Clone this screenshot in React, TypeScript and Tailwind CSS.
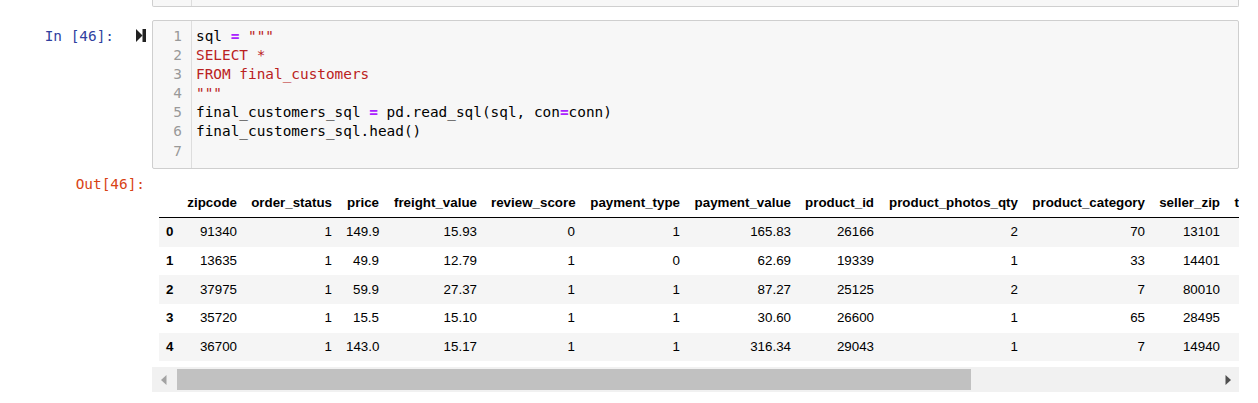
import React from "react";

const headers: { label: string; cls: string }[] = [
  { label: "zipcode", cls: "w-[64px]" },
  { label: "order_status", cls: "w-[95px]" },
  { label: "price", cls: "w-[47px]" },
  { label: "freight_value", cls: "w-[98px]" },
  { label: "review_score", cls: "w-[98px]" },
  { label: "payment_type", cls: "w-[105px]" },
  { label: "payment_value", cls: "w-[111px]" },
  { label: "product_id", cls: "w-[83px]" },
  { label: "product_photos_qty", cls: "w-[144px]" },
  { label: "product_category", cls: "w-[127px]" },
  { label: "seller_zip", cls: "w-[75px]" },
  { label: "total_items", cls: "w-[85px]" },
];

const rows = [
  ["0", "91340", "1", "149.9", "15.93", "0", "1", "165.83", "26166", "2", "70", "13101", "1"],
  ["1", "13635", "1", "49.9", "12.79", "1", "0", "62.69", "19339", "1", "33", "14401", "1"],
  ["2", "37975", "1", "59.9", "27.37", "1", "1", "87.27", "25125", "2", "7", "80010", "1"],
  ["3", "35720", "1", "15.5", "15.10", "1", "1", "30.60", "26600", "1", "65", "28495", "1"],
  ["4", "36700", "1", "143.0", "15.17", "1", "1", "316.34", "29043", "1", "7", "14940", "1"],
];

const mono = "font-['DejaVu_Sans_Mono','Liberation_Mono',monospace] text-[14.4px] leading-[19.17px]";

function Op() {
  return <span className="text-[#AA22FF] font-bold">=</span>;
}

function Str({ children }: { children: React.ReactNode }) {
  return <span className="text-[#BA2121]">{children}</span>;
}

export default function App() {
  return (
    <div className="w-[1258px] h-[403px] bg-white overflow-hidden text-black">
      {/* previous cell tail */}
      <div className="flex">
        <div className="w-[152px] shrink-0" />
        <div className="w-[1087px] h-[7px] border-x border-b border-[#cfcfcf] rounded-b-[2px] bg-[#f7f7f7] flex">
          <div className="w-[39px] h-full border-r border-[#dddddd]" />
        </div>
      </div>

      {/* input cell */}
      <div className="flex mt-[13px]">
        <div className={`w-[114px] shrink-0 text-right pt-[6.5px] text-[#303F9F] ${mono}`}>In&nbsp;[46]:</div>
        <div className="w-[38px] shrink-0 pt-[9px] pl-[22px]">
          <svg width="10" height="13" viewBox="0 0 10 13" className="block">
            <path d="M0 0 L6.5 6.5 L0 13 Z" fill="#222" />
            <rect x="6.5" y="0" width="3.5" height="13" fill="#222" />
          </svg>
        </div>
        <div className="w-[1087px] shrink-0 border border-[#cfcfcf] rounded-[2px] bg-[#f7f7f7] flex">
          <div className={`w-[39px] shrink-0 border-r border-[#dddddd] text-right pr-[9px] pt-[5.5px] pb-[7.5px] text-[#999999] ${mono}`}>
            {[1, 2, 3, 4, 5, 6, 7].map((n) => (
              <div key={n}>{n}</div>
            ))}
          </div>
          <div className={`pl-[4px] pt-[5.5px] whitespace-pre text-black ${mono}`}>
            <div>
              sql <Op /> <Str>"""</Str>
            </div>
            <div>
              <Str>SELECT *</Str>
            </div>
            <div>
              <Str>FROM final_customers</Str>
            </div>
            <div>
              <Str>"""</Str>
            </div>
            <div>
              final_customers_sql <Op /> pd.read_sql(sql, con<Op />conn)
            </div>
            <div>final_customers_sql.head()</div>
            <div> </div>
          </div>
        </div>
      </div>

      {/* output cell */}
      <div className="flex mt-[6px]">
        <div className={`w-[152px] shrink-0 text-right pr-[7px] text-[#D84315] ${mono}`}>Out[46]:</div>
        <div className="w-[1087px] shrink-0">
          <div className="overflow-hidden pt-[13px] pl-[7px]">
            <table className="table-fixed w-[1153px] min-w-[1153px] border-separate border-spacing-0 font-['Liberation_Sans',Arial,sans-serif] text-[13.35px] text-black whitespace-nowrap">
              <colgroup>
                <col className="w-[21px]" />
                {headers.map((h) => (
                  <col key={h.label} className={h.cls} />
                ))}
              </colgroup>
              <thead>
                <tr>
                  <th className="h-[30px] px-[7px] border-b border-black" />
                  {headers.map((h) => (
                    <th key={h.label} className="h-[30px] px-[7px] text-right font-bold border-b border-black align-middle">
                      {h.label}
                    </th>
                  ))}
                </tr>
              </thead>
              <tbody>
                {rows.map((r) => (
                  <tr key={r[0]} className="odd:bg-[#f5f5f5]">
                    <th className="h-[28.6px] px-[7px] text-left font-bold align-middle">{r[0]}</th>
                    {r.slice(1).map((v, i) => (
                      <td key={i} className="h-[28.6px] px-[7px] text-right align-middle">
                        {v}
                      </td>
                    ))}
                  </tr>
                ))}
              </tbody>
            </table>
          </div>
          {/* fake horizontal scrollbar */}
          <div className="mt-[6px] h-[25px] bg-[#f1f1f1] flex items-center">
            <div className="w-[25px] h-full flex items-center justify-center shrink-0">
              <svg width="6" height="10" viewBox="0 0 6 10" className="block -ml-[2px]">
                <path d="M5.5 0 L0 5 L5.5 10 Z" fill="#a3a3a3" />
              </svg>
            </div>
            <div className="w-[794px] h-[21px] bg-[#c1c1c1] shrink-0" />
            <div className="flex-1" />
            <div className="w-[25px] h-full flex items-center justify-center shrink-0">
              <svg width="6" height="10" viewBox="0 0 6 10" className="block ml-[2px]">
                <path d="M0.5 0 L6 5 L0.5 10 Z" fill="#505050" />
              </svg>
            </div>
          </div>
        </div>
      </div>
    </div>
  );
}
